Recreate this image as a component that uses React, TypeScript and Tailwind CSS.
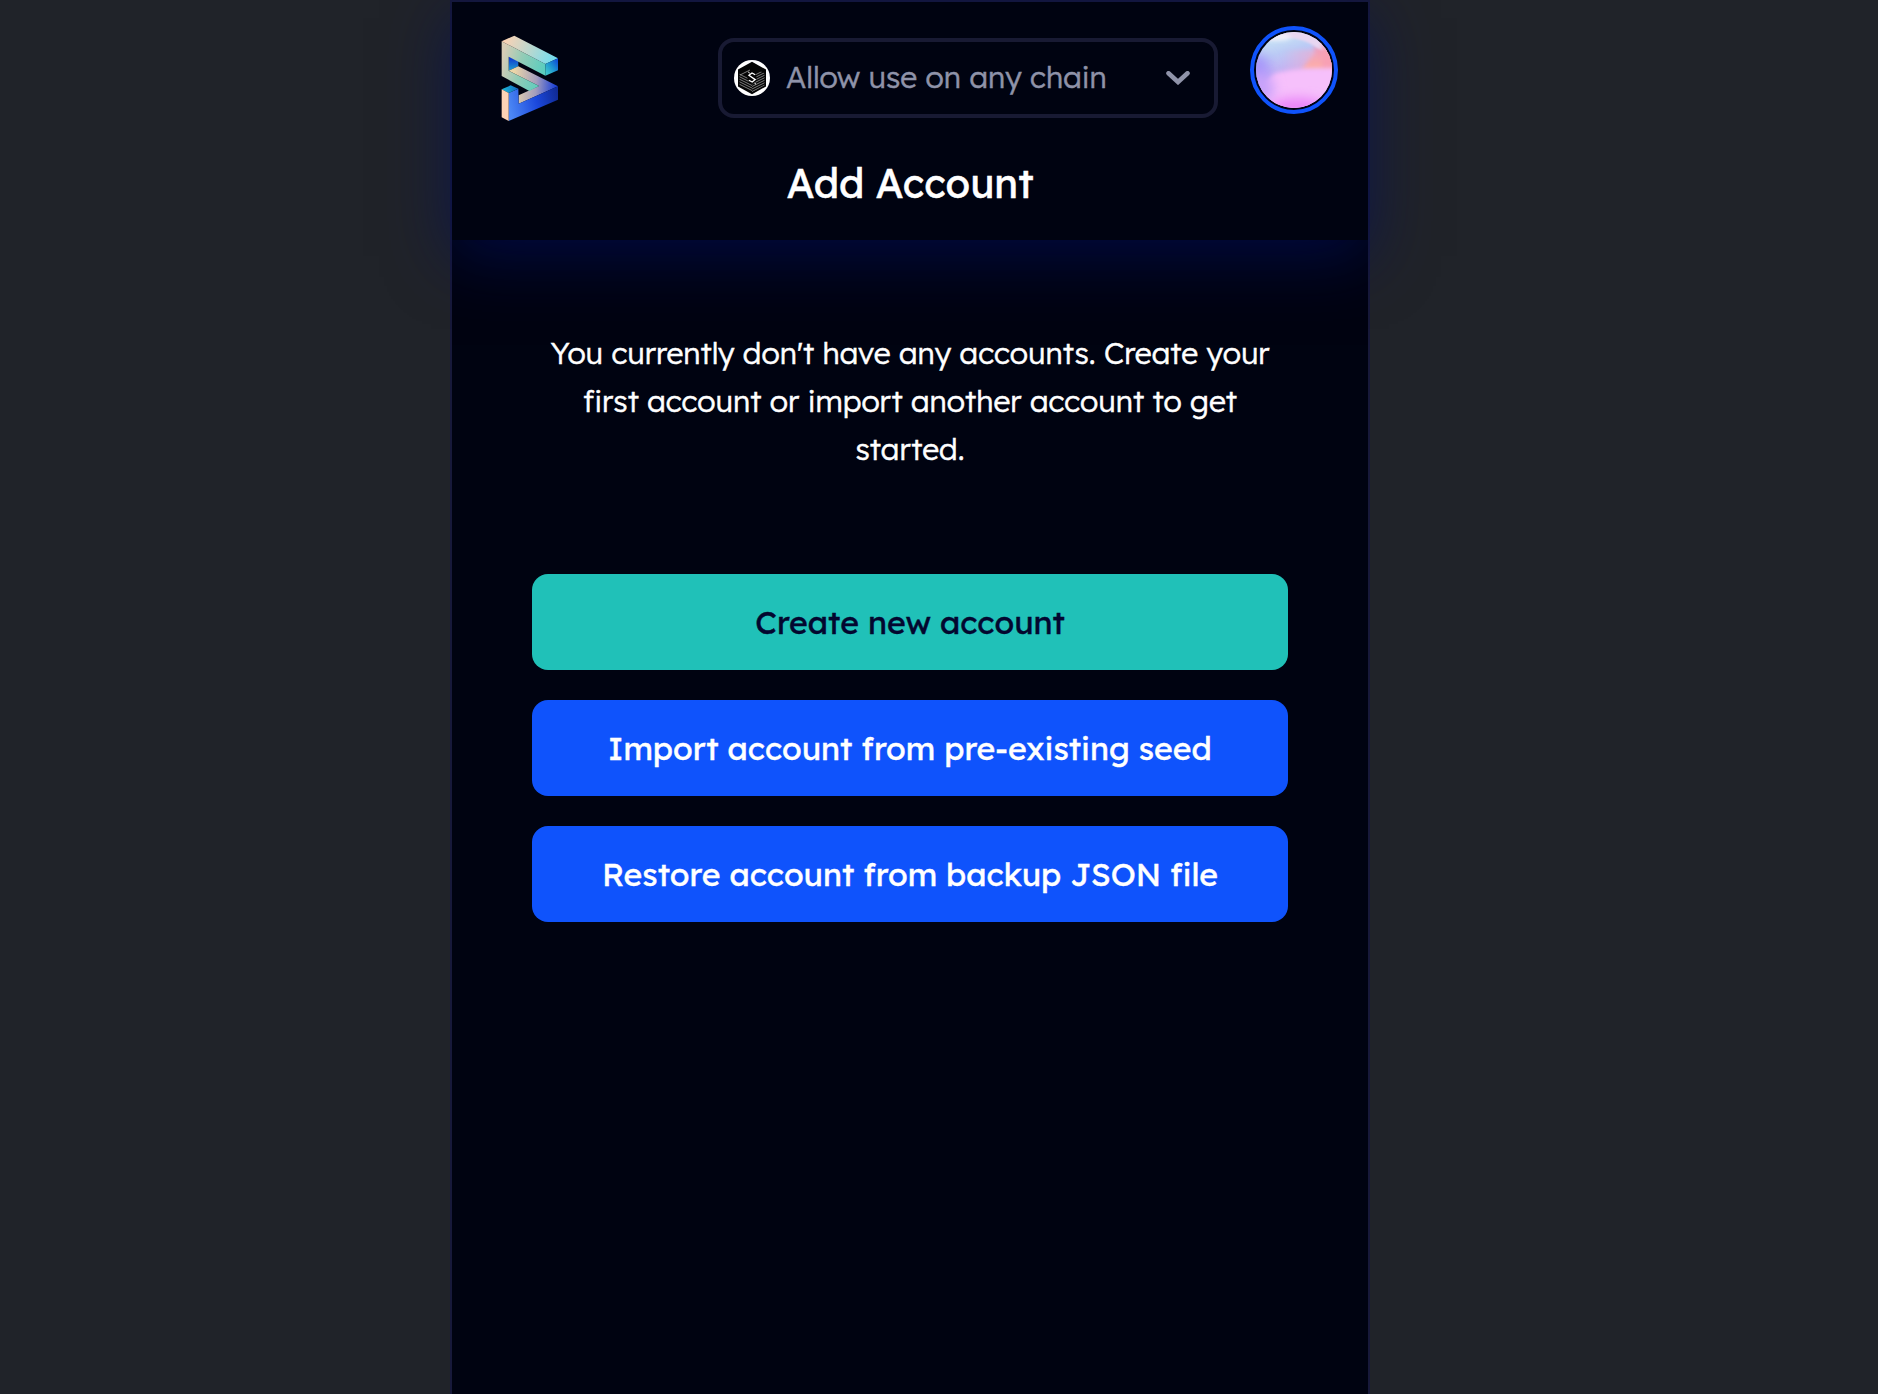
import type { ReactNode } from "react";

function Logo() {
  return (
    <svg viewBox="63 45 171 258" className="h-[86px] w-[57px]" aria-label="Home">
      <defs>
        <linearGradient id="lgTop" gradientUnits="userSpaceOnUse" x1="75" y1="55" x2="225" y2="125">
          <stop offset="0" stopColor="#fcd2b4" />
          <stop offset="0.5" stopColor="#b9d8cf" />
          <stop offset="1" stopColor="#6fdcf0" />
        </linearGradient>
        <linearGradient id="lgFront" gradientUnits="userSpaceOnUse" x1="65" y1="120" x2="190" y2="150">
          <stop offset="0" stopColor="#d8ccb6" />
          <stop offset="0.45" stopColor="#93ccb6" />
          <stop offset="1" stopColor="#5ccdbe" />
        </linearGradient>
        <linearGradient id="lgEnd" gradientUnits="userSpaceOnUse" x1="196" y1="155" x2="234" y2="125">
          <stop offset="0" stopColor="#3fc6cc" />
          <stop offset="0.55" stopColor="#1a8fd2" />
          <stop offset="1" stopColor="#1050d6" />
        </linearGradient>
        <linearGradient id="lgInner" gradientUnits="userSpaceOnUse" x1="95" y1="112" x2="95" y2="152">
          <stop offset="0" stopColor="#0f35cf" />
          <stop offset="1" stopColor="#1f9fd0" />
        </linearGradient>
        <linearGradient id="lgMid" gradientUnits="userSpaceOnUse" x1="100" y1="190" x2="225" y2="200">
          <stop offset="0" stopColor="#ecd6a8" />
          <stop offset="0.55" stopColor="#a39dbd" />
          <stop offset="1" stopColor="#1f43d6" />
        </linearGradient>
        <linearGradient id="lgBase" gradientUnits="userSpaceOnUse" x1="86" y1="255" x2="234" y2="220">
          <stop offset="0" stopColor="#4c87f4" />
          <stop offset="0.55" stopColor="#1b48dc" />
          <stop offset="1" stopColor="#102a94" />
        </linearGradient>
        <linearGradient id="lgCap" gradientUnits="userSpaceOnUse" x1="70" y1="208" x2="115" y2="206">
          <stop offset="0" stopColor="#1cb4d4" />
          <stop offset="1" stopColor="#1268c4" />
        </linearGradient>
      </defs>
      <polygon points="86,109 115,124 115,139 86,152" fill="url(#lgInner)" />
      <polygon points="86,152 115,139 234,199 116,251 116,226 177,198" fill="url(#lgMid)" />
      <polygon points="65,64 196,132 196,167 86,110 86,152 177,198 148,213 65,168" fill="url(#lgFront)" />
      <polygon points="65,64 103,47 234,115 196,132" fill="url(#lgTop)" />
      <polygon points="196,132 234,115 234,151 196,167" fill="url(#lgEnd)" />
      <polygon points="234,199 234,239 86,303 86,219 115,206 116,251" fill="url(#lgBase)" />
      <polygon points="65,208 92,196 115,206 86,219" fill="url(#lgCap)" />
      <polygon points="65,208 86,219 86,303 65,292" fill="#fdd3b5" />
    </svg>
  );
}

function ChainIcon() {
  return (
    <svg viewBox="0 0 36 36" className="size-9 shrink-0">
      <defs>
        <clipPath id="hex">
          <polygon points="18,8 30.5,13 30.5,25.5 18,32.5 5.5,25.5 5.5,11" />
        </clipPath>
      </defs>
      <circle cx="18" cy="18" r="18" fill="#fff" />
      <polygon points="18,1.8 32,9.5 32,26.5 18,34.2 4,26.5 4,9.5" fill="#050505" />
      <g clipPath="url(#hex)" stroke="#b0b0b0" strokeWidth="0.7">
        <path d="M4 13.500l14 7M4 16l14 7M4 18.500l14 7M4 21l14 7M4 23.500l14 7" />
        <path d="M18 16.500l14-7M18 19l14-7M18 21.500l14-7M18 24l14-7M18 26.500l14-7M18 29l14-7M18 31.500l14-7M6 15l10-5" />
      </g>
      <ellipse cx="18" cy="18" rx="4.600" ry="6" fill="#050505" />
      <path d="M21.200 14.800L18 13L14.900 15.200L21.200 19.600L18.200 22L14.800 20.200" fill="none" stroke="#fff" strokeWidth="1.300" />
      <path d="M14.200 12l1.600 1.200M20.400 23l1.600 1.200" stroke="#fff" strokeWidth="1" />
    </svg>
  );
}

function AvatarArt() {
  return (
    <svg viewBox="0 0 76 76" className="size-[76px] rounded-full">
      <defs>
        <filter id="soft" x="-60%" y="-60%" width="220%" height="220%">
          <feGaussianBlur stdDeviation="6" />
        </filter>
        <filter id="edge" x="-50%" y="-50%" width="200%" height="200%">
          <feGaussianBlur stdDeviation="2" />
        </filter>
        <filter id="crisp" x="-20%" y="-20%" width="140%" height="140%">
          <feGaussianBlur stdDeviation="0.9" />
        </filter>
        <linearGradient id="avUpper" gradientUnits="userSpaceOnUse" x1="24" y1="6" x2="34" y2="40">
          <stop offset="0" stopColor="#c6e0f5" />
          <stop offset="0.4" stopColor="#bbcbf5" />
          <stop offset="1" stopColor="#c6aef2" />
        </linearGradient>
        <linearGradient id="avRight" gradientUnits="userSpaceOnUse" x1="26" y1="0" x2="62" y2="0">
          <stop offset="0" stopColor="#e6b4da" stopOpacity="0" />
          <stop offset="1" stopColor="#e9b2d2" stopOpacity="0.9" />
        </linearGradient>
        <linearGradient id="avCoral" x1="0" y1="0" x2="0" y2="1">
          <stop offset="0" stopColor="#ec9cc2" />
          <stop offset="1" stopColor="#ffb0a6" />
        </linearGradient>
      </defs>
      <rect width="76" height="76" fill="url(#avUpper)" />
      <rect y="18" width="76" height="26" fill="url(#avRight)" filter="url(#edge)" />
      <path d="M58 13Q64 16 80 14V38H46Q52 28 59 22Z" fill="url(#avCoral)" filter="url(#edge)" />
      <path d="M10 -4H80V20Q66 20 58 14Q48 7 34 6Q24 6 12 9Z" fill="#e8d6f1" filter="url(#crisp)" />
      <ellipse cx="22" cy="5" rx="13" ry="3.500" fill="#f2f3fb" filter="url(#edge)" />
      <path d="M66 10Q72 14 80 28V38H66Z" fill="#f8a0b4" filter="url(#edge)" />
      <ellipse cx="0" cy="38" rx="14" ry="16" fill="#a596fa" filter="url(#soft)" />
      <path d="M18 42Q34 36 80 36V80H0V60Q8 50 18 42Z" fill="#f6c0fb" filter="url(#edge)" />
      <ellipse cx="4" cy="56" rx="14" ry="16" fill="#c8a2fa" filter="url(#soft)" />
      <ellipse cx="42" cy="76" rx="28" ry="10" fill="#e983f8" filter="url(#soft)" />
    </svg>
  );
}

function ActionButton({ primary = false, children }: { primary?: boolean; children: ReactNode }) {
  return (
    <button
      type="button"
      className={
        "flex h-24 w-full items-center justify-center rounded-2xl text-[32px] leading-10 font-normal [-webkit-text-stroke:0.4px_currentColor] " +
        (primary ? "bg-[#20c1b8] text-[#03072f]" : "bg-[#0f53fc] text-white")
      }
    >
      {children}
    </button>
  );
}

export default function App() {
  return (
    <div className="flex h-screen overflow-hidden bg-[#202329] pl-[450px] font-['Lexend','Lexend_Deca',Lato,sans-serif] text-white">
      <div className="flex w-[920px] shrink-0 flex-col border-x-2 border-t-2 border-[#17193a] bg-[#000311]">
        <header className="h-[238px] bg-[#000311] shadow-[0_16px_60px_rgba(0,14,90,0.65)]">
          <div className="flex h-[156px] items-start pt-6 pr-[30px] pl-[49px]">
            <div className="pt-[9px]">
              <Logo />
            </div>
            <button
              type="button"
              className="mt-3 ml-40 flex h-20 w-[500px] items-center rounded-2xl border-4 border-[#181a33] pr-6 pl-3 text-[#8f93a9]"
            >
              <ChainIcon />
              <span className="grow pb-0.5 pl-4 text-left text-[30px] leading-9 font-light [-webkit-text-stroke:0.5px_currentColor]">
                Allow use on any chain
              </span>
              <svg viewBox="0 0 24 14" className="h-3.5 w-6">
                <path d="M2.500 2.300L12 11L21.500 2.300" fill="none" stroke="currentColor" strokeWidth="4.600" strokeLinecap="round" strokeLinejoin="miter" />
              </svg>
            </button>
            <div className="ml-8 flex size-[88px] items-center justify-center rounded-full border-4 border-[#0f53fc]">
              <AvatarArt />
            </div>
          </div>
          <h1 className="text-center text-[40px] leading-[50px] font-normal [-webkit-text-stroke:0.5px_currentColor]">Add Account</h1>
        </header>
        <main className="flex flex-col items-center px-20 pt-[89px]">
          <p className="w-full text-center text-[30px] leading-[48px] font-light [-webkit-text-stroke:0.5px_currentColor]">
            You currently don't have any accounts. Create your first account or import another account to get started.
          </p>
          <div className="mt-[101px] flex w-full flex-col gap-[30px]">
            <ActionButton primary>Create new account</ActionButton>
            <ActionButton>Import account from pre-existing seed</ActionButton>
            <ActionButton>Restore account from backup JSON file</ActionButton>
          </div>
        </main>
      </div>
    </div>
  );
}
